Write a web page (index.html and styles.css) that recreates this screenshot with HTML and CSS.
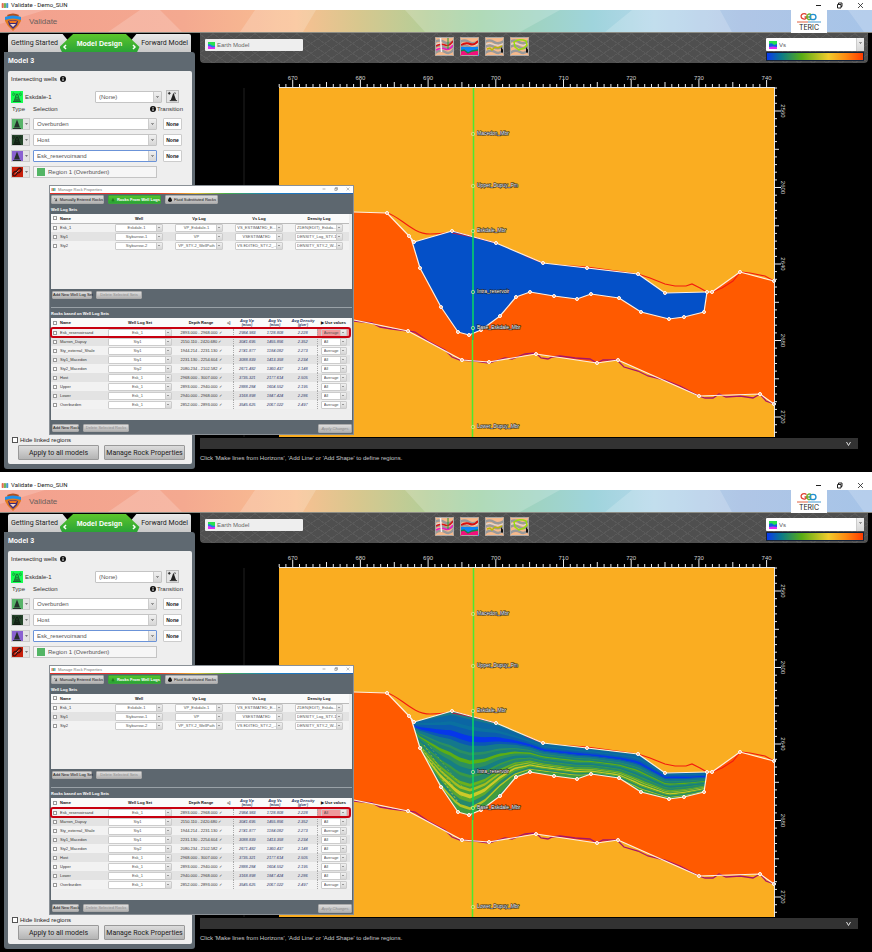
FILE: index.html
```html
<!DOCTYPE html>
<html lang="en">
<head>
<meta charset="utf-8">
<title>Validate - Demo_SUN</title>
<link rel="stylesheet" href="styles.css">
</head>
<body>
<main id="app" class="stack"></main>
<script src="app.js"></script>
</body>
</html>
```

FILE: styles.css
```css
* { box-sizing: border-box; }
body { margin: 0; background: #fff; font-family: "Liberation Sans", Arial, sans-serif; font-size: 6px; color: #333; }
button, select, input { font: inherit; color: inherit; margin: 0; padding: 0; }
svg { display: block; }
.stack { display: flex; flex-direction: column; gap: 8px; }

.win { position: relative; background: #000; }
.titlebar { display: flex; align-items: center; height: 10px; padding: 0 8px 0 1px; gap: 2px; background: #fff; color: #222; font-size: 6px; line-height: 10px; }
.titlebar .name { flex: 1; font-family: Roboto, sans-serif; }
.caption { display: flex; gap: 14px; }
.caption button { border: 0; background: none; width: 7px; height: 7px; }

.banner { position: relative; display: flex; align-items: center; height: 23px; border-bottom: 1px solid #8c8c84;
  background: linear-gradient(90deg, #f3a08e 0%, #f4a990 21%, #f9c092 34%, #d8c78e 41%, #b4ce98 49%, #9fd2a8 55%, #9fd4dc 68%, #b5d7ea 75%, #b0c6e6 85%, #a6c4e8 100%); }
.banner .facets { position: absolute; inset: 0; width: 100%; height: 100%; }
.banner .shield { position: relative; margin-left: 4px; }
.banner h1 { position: relative; flex: 1; margin: 0 0 0 7px; font-size: 8px; font-weight: 400; color: #6a5f5c; }
.banner .logo { position: relative; margin-right: 45px; background: #fff; }

.body { display: flex; align-items: stretch; }
.side { flex: 0 0 191px; margin: 1px 5px 3px 4px; display: flex; flex-direction: column; }
.tabs { display: flex; height: 18px; padding: 0 4px; }
.tabs button { border: 0; background: linear-gradient(#e9e9e9, #c9c9c9); height: 18px; font-size: 7px; white-space: nowrap; font-family: Roboto, sans-serif; color: #222; }
.tabs .first { flex: 1; text-align: left; padding-left: 3px; border-radius: 2px 0 0 0; clip-path: polygon(0 0, 86% 0, 100% 60%, 100% 100%, 0 100%); }
.tabs .last { flex: 1; text-align: right; padding-right: 3px; border-radius: 0 2px 0 0; clip-path: polygon(14% 0, 100% 0, 100% 100%, 0 100%, 0 60%); }
.tabs .on { flex: 0 0 80px; margin: 0 -12px; position: relative; z-index: 1; display: flex; justify-content: space-between; align-items: center; padding: 0 3px; font: bold 7px "Liberation Sans", sans-serif; color: #fff; background: linear-gradient(#5cc62c, #2aa336); clip-path: polygon(17% 0, 83% 0, 100% 72%, 97% 100%, 3% 100%, 0 72%); }
.tabs .on svg { margin-top: 8px; }

.panel { flex: 1; display: flex; flex-direction: column; background: #5f6971; padding: 0 3px 5px 4px; border-radius: 0 3px 3px 3px; }
.panel h2 { margin: 0; height: 19px; line-height: 18px; font-size: 7px; color: #fff; }
.card { flex: 1; display: flex; flex-direction: column; background: #eee; border-radius: 2px; padding: 2px 3px 4px; }
.line { display: flex; align-items: center; }
.heading { height: 12px; margin-bottom: 5px; gap: 3px; color: #222; }
.well { height: 13px; }
.well .wname { flex: 1; padding-left: 2px; }
.well .sel { width: 67px; height: 12px; }
.well .tower { width: 13px; height: 13px; margin: 0 10px 0 4px; border: 1px solid #bbb; background: #e6e6e6; }
.cols { height: 11px; margin-bottom: 4px; }
.cols .c1 { width: 22px; padding-left: 1px; }
.cols .c2 { flex: 1; }
.cols .c3 { display: flex; gap: 1px; align-items: center; margin-right: 6px; }
.rock { height: 12px; margin-bottom: 4px; }
.type { display: flex; width: 19px; height: 12px; border: 0; background: #e4e4e4; align-items: center; outline: 1px solid #ccc; outline-offset: -1px; }
.type .arr { width: 7px; }
.sel { appearance: none; display: block; border: 1px solid #c4c4c4; border-radius: 1px; color: #555; padding: 0 8px 0 3px;
  background: linear-gradient(#888, #888) right 3px top 5px / 1px 1px no-repeat, linear-gradient(#999, #999) right 2px top 4px / 3px 1px no-repeat, linear-gradient(#ccc, #ccc) right 7px top / 1px 100% no-repeat, linear-gradient(#f0f0f0, #d6d6d6) right / 7px 100% no-repeat, #fff; }
.rock .sel, .rock .region { width: 124px; height: 12px; margin-left: 3px; }
.rock .active { border-color: #6b93d8; }
.rock .none { width: 19px; height: 12px; margin-left: 6px; border: 1px solid #ccc; border-radius: 1px; background: #fff; font: bold 5px "Liberation Sans", sans-serif; color: #111; }
.region { display: flex; align-items: center; gap: 3px; padding-left: 3px; border: 1px solid #c4c4c4; background: #f6f6f6; color: #555; text-align: left; }
.swatch { width: 8px; height: 8px; background: #53b565; }
.fill { flex: 1; }
.hide { display: flex; align-items: center; gap: 2px; height: 8px; margin-bottom: 1px; color: #222; }
input[type=checkbox] { appearance: none; flex: none; width: 6px; height: 6px; border: 1px solid #555; background: #fff; }
.hide input { margin-left: 1px; }
.actions { display: flex; gap: 5px; padding: 0 4px 0 7px; }
.actions button { flex: 1; height: 15px; border: 1px solid #999; border-radius: 1px; background: linear-gradient(#dcdcdc, #b4b4b4); font: 7px Roboto, sans-serif; color: #222; white-space: nowrap; }

.view { flex: 1; min-width: 0; margin-right: 4px; display: flex; flex-direction: column; }
.toolbar { display: flex; align-items: flex-start; height: 30px; padding: 4px 4px 0 5px; border-radius: 0 0 4px 4px;
  background: repeating-linear-gradient(35deg, transparent 0 7px, #595959 7px 8px), repeating-linear-gradient(-35deg, transparent 0 7px, #595959 7px 8px), #4f4f4f; }
.earth { display: flex; align-items: center; width: 98px; height: 12px; margin-top: 2px; background: #eee; border-radius: 1px; }
.earth svg, .prop svg { flex: none; margin: 0 2px 0 3px; }
.earth input { width: 80px; border: 0; background: none; color: #666; }
.tools { flex: 1; display: flex; gap: 6px; padding-left: 20%; }
.tools button { width: 19px; height: 19px; padding: 0; border: 0; background: none; }
.scale { width: 98px; margin-top: 1px; }
.prop { display: flex; align-items: center; height: 13px; background: #fff; border-radius: 1px; }
.prop .sel { flex: 1; height: 13px; border: 0; padding-left: 0; }
.ramp { height: 9px; margin-top: 1px; border: 1px solid #15233a; background: linear-gradient(90deg, #0838f0, #0a7a8a 15%, #58ac14 36%, #f2cc2c 64%, #ff8a10 82%, #ff3c00); }
.chart { width: 100%; height: auto; }
.chart text { font-family: "Liberation Sans", sans-serif; font-size: 6px; fill: #d0d0d0; }
.chart .lbl { font-size: 5px; fill: #fff; stroke: #222; stroke-width: 1px; paint-order: stroke; }
.drawer { display: flex; justify-content: flex-end; align-items: center; height: 11px; margin: 1px 10px 0 0; border: 0; background: #323232; padding-right: 7px; }
.status { margin: 0; height: 23px; line-height: 19px; color: #c8c8c8; }

.dialog { position: absolute; left: 49px; top: 185px; width: 305px; background: #5d676f; font-size: 4px; line-height: 5px; padding-bottom: 2px; outline: 1px solid #8a9096; outline-offset: -1px; }
.dtitle { display: flex; align-items: center; gap: 2px; height: 8px; padding: 0 4px 0 2px; background: #fff; color: #777; }
.dtitle .name { flex: 1; }
.dtitle .caption { gap: 8px; }
.dtitle .caption button { width: 4px; height: 4px; }
.rainbow { height: 1px; background: linear-gradient(90deg, #e3322c, #e3322c 35%, #e6b52c 48%, #4aae4a 58%, #1a7fc4 72%, #2464b4); }
.dcontent { padding: 1px 2px 0; }
.dtabs { display: flex; gap: 4px; }
.dtabs button, .dbtn { height: 9px; border: 1px solid #aaa; border-radius: 1px; background: linear-gradient(#ddd, #b2b2b2); color: #111; white-space: nowrap; line-height: 6px; }
.dtabs button { display: flex; align-items: center; gap: 2px; width: 53px; padding-left: 2px; }
.dtabs .on { background: linear-gradient(#52c22e, #28a436); border-color: #3ba33b; color: #fff; font-weight: bold; }
.dialog h3 { margin: 0; height: 10px; line-height: 12px; font-size: 4px; color: #fff; }
.grid { background: #eee; width: 100%; }
.sets { min-height: 75px; padding-right: 3px; }
.rocks { min-height: 102px; padding-right: 2px; }
table { width: 100%; border-collapse: collapse; table-layout: fixed; }
th, td { padding: 0; height: 9px; text-align: center; white-space: nowrap; color: #333; }
th { color: #111; background: #fafafa; border-bottom: 1px solid #bbb; }
.rocks th { height: 10px; }
tr > :first-child { text-align: left; }
tbody tr:nth-child(even) td { background: #e3e3e3; }
tbody tr:nth-child(odd) td { background: #f2f2f2; }
.nm { display: flex; align-items: center; gap: 3px; padding-left: 2px; }
.nm input { width: 4px; height: 4px; border-color: #999; }
.grid .sel { width: 48px; height: 8px; margin: 0 auto; padding: 0 6px 0 1px; text-align: center; text-align-last: center; border-color: #ccc; background-size: 0 0, 2px 1px, 1px 100%, 6px 100%, auto; background-position: 0 0, right 2px center, right 5px top, right, 0 0; line-height: 6px; }
.rocks .sel { width: 64px; }
.rocks .use { width: 26px; text-align-last: left; padding-left: 2px; }
.num { font-style: italic; color: #33406e; }
th.num { color: #223060; line-height: 5px; }
.num small { display: block; font-size: 3px; line-height: 4px; }
.edge { border-left: 1px dotted #aaa; }
.marked { outline: 2px solid #c8000f; outline-offset: -1px; border-radius: 2px; }
.marked td:last-child, .marked .use { background-color: #ef9a9c !important; }
.dfoot { display: flex; gap: 4px; padding-left: 1px; }
.dfoot .dbtn { height: 8px; }
.dfoot .add { width: 40px; }
.dfoot .addrock { width: 27px; }
.dfoot .del { width: 46px; color: #8c8c8c; }
.dfoot .apply { width: 34px; height: 9px; margin: 0 0 0 auto; font-style: italic; color: #8c8c8c; }
.f1 { margin-top: 2px; }
.f2 { margin-top: 4px; }
.rule { border: 0; height: 1px; background: #99a1a7; margin: 8px 0 0; }
```

FILE: app.js
```js
const pts = s => s.trim().split(/\s+/).map(p => p.split(',').map(Number));

const upper = '279,210 354,212 387,213 409,236 414,242 452,231 496,243 543,263 587,268 638,274 665,293 707,292 712,292 740,272 774,281';
const lower = '774,404 760,394 699,396 618,360 597,363 536,354 489,362 462,360 408,331 354,320 279,306';
const bodyTop = '414,242 452,231 496,243 543,263 587,268 638,274 665,293 707,292';
const bodyBottom = '704,312 684,317 669,319 641,312 619,298 591,294 577,299 554,296 530,292 516,297 500,316 481,330 469,335 458,332 441,307 420,268 411,238';

const marks = [
  [134, 'Macedon_Mbr'], [186, 'Upper_Dupuy_Fm'], [231, 'Eskdale_Mbr'],
  [292, 'Intra_reservoir'], [328, 'Base_Eskdale_Mbr'], [427, 'Lower_Dupuy_Mbr']
];

const at = (line, x) => {
  for (let i = 1; i < line.length; i++) {
    if (x <= line[i][0]) {
      const [a, b] = [line[i - 1], line[i]];
      return a[1] + (b[1] - a[1]) * (x - a[0]) / (b[0] - a[0]);
    }
  }
  return line[line.length - 1][1];
};

/* Seismic layers between the reservoir's top and base: [from, to, colour] as depth fractions. */
const layers = [
  [0, 0.03, '#1a7a86'], [0.03, 0.1, '#0b66a4'], [0.1, 0.14, '#0a70a0'], [0.14, 0.2, '#0a5cb0'], [0.2, 0.26, '#0636ea'],
  [0.26, 0.3, '#0a58b4'], [0.3, 0.37, '#14788c'], [0.37, 0.4, '#2a8f62'], [0.4, 0.45, '#1c8078'], [0.45, 0.49, '#5cae14'],
  [0.49, 0.54, '#2c9060'], [0.54, 0.6, '#167e84'], [0.6, 0.63, '#3a9a44'], [0.63, 0.69, '#25896c'], [0.69, 0.72, '#6cb01c'],
  [0.72, 0.74, '#3f9c48'], [0.74, 0.77, '#a4bc20'], [0.77, 0.8, '#44a03c'], [0.8, 0.84, '#ccca28'], [0.84, 0.88, '#5aa830'],
  [0.88, 0.93, '#25896c'], [0.93, 0.96, '#b4c424'], [0.96, 1.05, '#3f9c40']
];
const stackTop = pts('405,240 414,241 452,232 496,243 543,263 587,268 638,274 665,291 710,292');
const stackBase = pts('405,244 420,277 441,310 458,330 470,334 484,326 500,309 514,297 530,291 554,294 577,297 591,296 619,300 641,311 669,319 684,317 710,311');

const edgeAt = f => {
  const p = [];
  for (let x = 405; x <= 710; x += 5) {
    const t = at(stackTop, x), b = at(stackBase, x);
    p.push(x + ',' + Math.round((t + (b - t) * f) * 10) / 10);
  }
  return p;
};
const seismic = () => layers.map(([a, b, color]) =>
  `<polygon points="${edgeAt(a).join(' ')} ${edgeAt(b + 0.01).reverse().join(' ')}" fill="${color}"/>`).join('') +
  '<g fill="none" stroke="#c3c62c" stroke-width="1" stroke-dasharray="2 2"><path d="M421 266 444 302 460 325"/><path d="M424 265 446 297 462 317" opacity=".7"/><path d="M428 264 448 290 462 306" opacity=".4"/></g>';

const knots = s => pts(s).map(([x, y]) => `<circle cx="${x}" cy="${y}" r="1.5"/>`).join('');

const chart = (layered, id) => {
  let axis = '';
  for (let i = -2; i <= 71; i++) {
    const x = 292.7 + i * 6.77;
    if (x > 773) break;
    const len = i % 10 === 0 ? 7 : i % 5 === 0 ? 5 : 3;
    axis += `<path d="M${x.toFixed(1)} 87V${87 - len}"/>`;
  }
  for (let i = -3; i <= 42; i++) {
    const y = 111 + i * 7.65;
    const len = i % 10 === 0 ? 7 : i % 5 === 0 ? 5 : 3;
    axis += `<path d="M774 ${y.toFixed(1)}h${len}"/>`;
  }
  const tops = [670, 680, 690, 700, 710, 720, 730, 740].map((v, i) =>
    `<text x="${(292.7 + i * 67.7).toFixed(1)}" y="80" text-anchor="middle">${v}</text>`).join('');
  const sides = [2560, 2600, 2640, 2680, 2720].map((v, i) =>
    `<text transform="translate(781 ${(111 + i * 76.5).toFixed(1)}) rotate(90)" text-anchor="middle">${v}</text>`).join('');
  return `<svg class="chart" viewBox="200 63 668 374" role="img" aria-label="Cross section">
    <path d="M244 88V437" stroke="#202020"/>
    <rect x="279" y="87" width="495" height="350" fill="#faad21"/>
    <polygon points="${upper} ${lower}" fill="#ff5a00"/>
    <g fill="none" stroke="#f21d10" stroke-width="1.2">
      <path d="M387 213C400 216 412 234 430 234S448 232 456 232L496 244 543 264 587 267 638 274 650 278 665 284 675 286 686 286 692 284 700 288 707 292M712 292 722 288 733 281 740 272 750 273 765 276 774 281"/>
    </g>
    <clipPath id="${id}"><polygon points="${bodyTop} ${bodyBottom}"/></clipPath>
    <g clip-path="url(#${id})"><rect x="405" y="225" width="310" height="115" fill="${layered ? '#23886c' : '#0450c8'}"/>${layered ? seismic() : ''}</g>
    <path d="M452 233 473 237 496 243M543 263 525 256" fill="none" stroke="#c01840"/>
    <polyline points="279,307 354,321 372,323 380,327 392,329 408,331 415,332 428,341 445,350 452,357 460,360 475,361 489,363 505,358 512,359 525,354 536,353 541,358 548,359 552,357 560,356 575,358 590,359 597,363 603,360 617,360 624,367 638,371 648,376 665,380 680,386 699,396 705,398 713,398 719,394 726,397 740,396 753,398 760,394 766,401 774,404" fill="none" stroke="#a81468" stroke-width="1.3"/>
    <g fill="none" stroke="#fff0e0" stroke-width="1.2" stroke-linejoin="round">
      <polyline points="${upper}"/><polyline points="${lower}"/><polyline points="707,292 ${bodyBottom}"/>
    </g>
    <path d="M473.5 88V230M472.500 340V437" stroke="#4ae832" stroke-width="1.500"/><path d="M473 230V340" stroke="#08d860" stroke-width="1.500"/>
    <g fill="#ffb080" stroke="#fff" stroke-width="1">${knots('387,213 409,236 ' + bodyTop + ' 712,292 740,272 774,281')}${knots(bodyBottom.replace(' 411,238', ''))}${knots(lower.replace(' 354,320 279,306', ''))}</g>
    <g fill="none" stroke="#d8e8a0" stroke-width=".7">${marks.map(m => `<circle cx="473" cy="${m[0]}" r="1.7"/>`).join('')}</g>
    ${marks.map(m => `<text class="lbl" x="477" y="${m[0] + 1}">${m[1]}</text>`).join('')}
    <g stroke="#e8e8e8" stroke-width="1"><path d="M279 87.5H774M774.5 87V437"/>${axis}</g>
    ${tops}${sides}
  </svg>`;
};

const tower = (bg, fg, w = 12, waves = true) => `<svg width="${w}" height="${w}" viewBox="0 0 12 12"><rect width="12" height="12" fill="${bg}"/><g fill="none" stroke="${fg}" stroke-width="1"><path d="M3 10.5 5.5 3h1L9 10.5M4 8 8 10M8 8 4 10M5 5.5 7.5 8M7 5.5 4.5 8"/><path d="M2 10.5h8"/>${waves ? '<path d="M4 2Q3 3.200 4 4.500M8 2q1 1.200 0 2.500M2.500 1.500q-1.500 1.800 0 3.500M9.500 1.500q1.500 1.800 0 3.500" stroke-width=".7"/>' : ''}</g></svg>`;
const solidTower = bg => `<svg width="12" height="12" viewBox="0 0 12 12"><rect width="12" height="12" fill="${bg}"/><path d="M6 1.500 9 9.500H3z" fill="#26302c"/><path d="M2 10.500h8M5 6h2M4.500 8h3" stroke="#26302c" fill="none"/></svg>`;
const addTower = '<svg width="11" height="11" viewBox="0 0 12 12"><path d="M7 2 10 10H4z" fill="#222"/><path d="M3 10.500h8M1 2.500h3M2.500 1v3M8.500 1.500q1 1 0 2" stroke="#222" fill="none"/></svg>';
const link = '<svg width="12" height="12" viewBox="0 0 12 12"><rect width="12" height="12" fill="#c81e0a"/><g fill="none" stroke="#3a1010" stroke-width="1.300"><rect x="5.500" y="3" width="5" height="3.200" rx="1.600" transform="rotate(-45 8 4.600)"/><rect x="1.500" y="6" width="5" height="3.200" rx="1.600" transform="rotate(-45 4 7.600)"/></g><path d="M4.500 7.500 7.500 4.500" stroke="#e8b0a0" stroke-width=".7"/></svg>';
const info = '<svg width="6" height="6" viewBox="0 0 6 6"><circle cx="3" cy="3" r="3" fill="#111"/><path d="M3 2.500V5M3 1v.900" stroke="#fff"/></svg>';
const arr = '<svg class="arr" width="7" height="4" viewBox="0 0 7 4"><path d="M2 1h3L3.500 3z" fill="#777"/></svg>';
const brand = (w, h) => `<svg width="${w}" height="${h}" viewBox="0 0 8 6"><rect width="2.500" height="6" rx="1" fill="#e46a50"/><rect x="2.700" width="2.500" height="6" rx="1" fill="#74b458"/><rect x="5.400" width="2.500" height="6" rx="1" fill="#4a98cc"/></svg>`;
const caption = `<span class="caption">
  <button aria-label="Minimise"><svg viewBox="0 0 7 7"><path d="M1 3.500h5" stroke="currentColor"/></svg></button>
  <button aria-label="Restore"><svg viewBox="0 0 7 7"><path d="M1.500 2.500h3.500V6H1.500zM2.500 2.500V1H6v3.500H5" fill="none" stroke="currentColor"/></svg></button>
  <button aria-label="Close"><svg viewBox="0 0 7 7"><path d="M1 1 6 6M6 1 1 6" stroke="currentColor" stroke-width=".8"/></svg></button></span>`;
const cube = '<svg width="7" height="7" viewBox="0 0 7 7"><rect width="7" height="7" fill="#28e050"/><path d="M0 2Q3 2 4 3.500L7 4V7H0z" fill="#2078f0"/><path d="M0 4Q3 4 4 5.500L7 5V7H0z" fill="#e030f0"/></svg>';
const vsIcon = '<svg width="8" height="8" viewBox="0 0 8 8"><rect width="8" height="8" fill="#28e050"/><path d="M0 3Q3 1 5 4L8 3V8H0z" fill="#1060e0"/><path d="M0 6Q4 5 8 6V8H0z" fill="#e030f0"/></svg>';

const strata = extra => `<svg width="19" height="19" viewBox="0 0 19 19"><rect width="19" height="19" rx="1" fill="#f6b98c"/><g fill="none" stroke="#9a9a9a" stroke-width="2.500"><path d="M0 5Q5 2 9 5T19 4M0 10Q5 7 9 10T19 9M0 16Q5 12 10 15T19 12"/></g><path d="M0 7.500Q5 5 9 7.500T19 6.500" fill="none" stroke="#dcdcdc"/>${extra}<rect x=".5" y=".5" width="18" height="18" rx="1" fill="none" stroke="#a8a8a8"/></svg>`;
const cursor = '<path d="M16 10v6l1-1 1 1.500 1-1-1-1.500h1z" fill="#111"/>';
const tools = [
  ['Make lines from horizons', strata('<path d="M1 9Q6 6 10 8T18 4" fill="none" stroke="#d81818" stroke-width="1.500"/><path d="M1 13Q6 10 10 12T18 8" fill="none" stroke="#e81cc0" stroke-width="1.500"/><path d="M5.500 1 6.500 15" stroke="#f4f4f4" stroke-width="1.500"/><path d="M13 1V12" stroke="#2c9c2c"/>')],
  ['Fill regions', strata('<path d="M0 10h19v9H0z" fill="#0a84f8"/><path d="M1 8Q6 5 10 7T18 4" fill="none" stroke="#d81010" stroke-width="2"/><path d="M0 14 4 13 8 16 12 14 18 13V19H0z" fill="#f0107c"/><path d="M0 14 4 13 8 16 12 14 18 13" fill="none" stroke="#108848" stroke-width="1.300"/>')],
  ['Add line', strata('<path d="M2 12 5 11 7 13 10 10 13 11 17 9" fill="none" stroke="#b8b80c" stroke-width="1.500"/>' + cursor)],
  ['Add shape', strata('<path d="M4 5Q9 1 16 4L17 8 14 11 9 13 5 10Z" fill="none" stroke="#98dc10" stroke-width="1.500"/>' + cursor)]
];

const select = (value, cls = '', label = value) => `<select class="sel ${cls}" aria-label="${label}"><option>${value}</option></select>`;
const box = name => `<label class="nm"><input type="checkbox">${name}</label>`;

const setRows = [
  ['Esk_1', 'Eskdale-1', 'VP_Eskdale-1', 'VS_ESTIMATED_E...', 'ZDEN(EDIT)_Eskda...'],
  ['Sty1', 'Stybarrow-1', 'VP', 'VSESTIMATED', 'DENSITY_Log_STY-1'],
  ['Sty2', 'Stybarrow-2', 'VP_STY-2_WellPath', 'VS EDITED_STY-2_...', 'DENSITY_STY-2_W...']
];
const rockRows = [
  ['Esk_reservoirsand', 'Esk_1', '2893.000 - 2968.000', '2984.983', '1728.808', '2.228', 'Average'],
  ['Marron_Dupuy', 'Sty1', '2150.110 - 2420.680', '3041.695', '1455.856', '2.352', 'All'],
  ['Sty_external_Shale', 'Sty1', '1944.214 - 2231.130', '2741.877', '1184.082', '2.273', 'Average'],
  ['Sty1_Macedon', 'Sty1', '2231.130 - 2254.604', '3088.839', '1413.358', '2.234', 'All'],
  ['Sty2_Macedon', 'Sty2', '2080.234 - 2102.582', '2671.482', '1360.437', '2.148', 'All'],
  ['Host', 'Esk_1', '2968.000 - 3007.000', '3735.321', '2177.614', '2.505', 'Average'],
  ['Upper', 'Esk_1', '2893.000 - 2940.000', '2888.284', '1604.552', '2.195', 'All'],
  ['Lower', 'Esk_1', '2940.000 - 2968.000', '3168.898', '1847.424', '2.286', 'All'],
  ['Overburden', 'Esk_1', '2852.000 - 2893.000', '3545.625', '2067.022', '2.497', 'Average']
];

const dialog = use => `<section class="dialog" aria-label="Manage Rock Properties">
  <div class="dtitle">${brand(5, 3)}<span class="name">Manage Rock Properties</span>${caption}</div>
  <div class="rainbow"></div>
  <div class="dcontent">
    <div class="dtabs"><button>${addTower.replace('width="11" height="11"', 'width="5" height="5"')}Manually Entered Rocks</button><button class="on">${tower('none', '#175a20', 5, false)}Rocks From Well Logs</button><button><svg width="4" height="5" viewBox="0 0 4 5"><path d="M2 0Q4 2 4 3.200A2 1.800 0 0 1 0 3.200Q0 2 2 0" fill="#111"/></svg>Fluid Substituted Rocks</button></div>
    <h3>Well Log Sets</h3>
    <div class="grid sets"><table>
      <colgroup><col style="width:58px"><col><col><col><col></colgroup>
      <thead><tr><th>${box('Name')}</th><th>Well</th><th>Vp Log</th><th>Vs Log</th><th>Density Log</th></tr></thead>
      <tbody>${setRows.map(r => `<tr><td>${box(r[0])}</td>${r.slice(1).map(v => `<td>${select(v)}</td>`).join('')}</tr>`).join('')}</tbody>
    </table></div>
    <div class="dfoot f1"><button class="dbtn add">Add New Well Log Set</button><button class="dbtn del" disabled>Delete Selected Sets</button></div>
    <hr class="rule">
    <h3>Rocks based on Well Log Sets</h3>
    <div class="grid rocks"><table>
      <colgroup><col style="width:51px"><col style="width:76px"><col style="width:46px"><col style="width:9px"><col style="width:28px"><col style="width:28px"><col style="width:28px"><col></colgroup>
      <thead><tr><th>${box('Name')}</th><th>Well Log Set</th><th>Depth Range</th><th>◁</th><th class="num">Avg Vp<small>(m/sec)</small></th><th class="num">Avg Vs<small>(m/sec)</small></th><th class="num">Avg Density<small>(g/cm³)</small></th><th>▶ Use values</th></tr></thead>
      <tbody>${rockRows.map((r, i) => `<tr${i ? '' : ' class="marked"'}><td>${box(r[0])}</td><td>${select(r[1])}</td><td>${r[2]} ✓</td><td></td><td class="num edge">${r[3]}</td><td class="num">${r[4]}</td><td class="num">${r[5]}</td><td class="edge">${select(i ? r[6] : use, 'use')}</td></tr>`).join('')}</tbody>
    </table></div>
    <div class="dfoot f2"><button class="dbtn addrock">Add New Rock</button><button class="dbtn del" disabled>Delete Selected Rocks</button><button class="dbtn apply" disabled>Apply Changes</button></div>
  </div>
</section>`;

const rock = (icon, name, cls = '') => `<div class="line rock"><button class="type" aria-label="Type">${icon}${arr}</button>${select(name, cls)}<button class="none">None</button></div>`;

const win = (layered, i) => `<section class="win">
  <div class="titlebar">${brand(8, 5)}<span class="name">Validate - Demo_SUN</span>${caption}</div>
  <header class="banner">
    <svg class="facets" viewBox="0 0 872 22" preserveAspectRatio="none"><g fill="#fff" opacity=".18"><path d="M0 0H45L0 14zM108 22 140 0H160L182 22zM255 0H316L303 22H240zM405 0H560L520 22H425zM632 0H720L732 22H605zM848 0H872V22H864z"/></g></svg>
    <svg class="shield" width="18" height="19" viewBox="0 0 18 19"><path d="M1 5Q9 2 17 5V9L14 14 9 19 4 14 1 9z" fill="#e07a20"/><path d="M3 3Q9 0 15 3L14 5Q9 3 4 5z" fill="#b4501c"/><path d="M1 5Q9 2 17 5V8Q9 5 1 8z" fill="#2090e8"/><path d="M4 9Q9 7 14 9L13 13 9 17 5 13z" fill="#3c2c78"/><path d="M5 9Q9 8 13 9L12 11H6z" fill="#f07820"/><path d="M6 12h6L9 15z" fill="#f8d8c0"/></svg>
    <h1>Validate</h1>
    <svg class="logo" width="36" height="23" viewBox="0 0 36 23" role="img" aria-label="GeoTeric"><g fill="none" stroke-width="1.300"><path d="M15.500 4.700A3 2.700 0 1 0 16 7H13.500" stroke="#e04030"/><path d="M16 7H20.500M20.500 4.700A3 2.700 0 1 0 20.500 9" stroke="#70b030"/><ellipse cx="22" cy="7" rx="3" ry="2.700" stroke="#2090d0"/></g><path d="M6 12H17" stroke="#e06040"/><path d="M17 12H30" stroke="#4098d0"/><text x="18" y="20" text-anchor="middle" font-family="Inter" font-size="7" fill="#222">TERIC</text></svg>
  </header>
  <div class="body">
    <aside class="side">
      <nav class="tabs"><button class="first">Getting Started</button><button class="on"><svg width="4" height="6" viewBox="0 0 4 6"><path d="M3 1 1 3 3 5" fill="none" stroke="#fff" stroke-width="1.500"/></svg>Model Design<svg width="4" height="6" viewBox="0 0 4 6"><path d="M1 1 3 3 1 5" fill="none" stroke="#fff" stroke-width="1.500"/></svg></button><button class="last">Forward Model</button></nav>
      <div class="panel">
        <h2>Model 3</h2>
        <div class="card">
          <div class="line heading">Intersecting wells ${info}</div>
          <div class="line well">${tower('#14ff50', '#1c6c34')}<span class="wname">Eskdale-1</span>${select('(None)')}<button class="tower" aria-label="Add well">${addTower}</button></div>
          <div class="line cols"><span class="c1">Type</span><span class="c2">Selection</span><span class="c3">${info}Transition</span></div>
          ${rock(solidTower('#57b368'), 'Overburden')}
          ${rock(tower('#26472c', '#101c12'), 'Host')}
          ${rock(solidTower('#8a62d2'), 'Esk_reservoirsand', 'active')}
          <div class="line rock"><button class="type" aria-label="Linked type">${link}${arr}</button><button class="region"><span class="swatch"></span>Region 1 (Overburden)</button></div>
          <div class="fill"></div>
          <label class="hide"><input type="checkbox">Hide linked regions</label>
          <div class="actions"><button>Apply to all models</button><button>Manage Rock Properties</button></div>
        </div>
      </div>
    </aside>
    <section class="view">
      <div class="toolbar">
        <div class="earth">${cube}<input type="text" value="Earth Model" aria-label="Model name"></div>
        <div class="tools">${tools.map(t => `<button aria-label="${t[0]}">${t[1]}</button>`).join('')}</div>
        <div class="scale"><div class="prop">${vsIcon}${select('Vs')}</div><div class="ramp"></div></div>
      </div>
      ${chart(layered, 'reservoir' + i)}
      <button class="drawer" aria-label="Expand"><svg width="5" height="6" viewBox="0 0 5 6"><path d="M.5 1 2.500 4.500 4.500 1" fill="none" stroke="#ddd"/></svg></button>
      <p class="status">Click 'Make lines from Horizons', 'Add Line' or 'Add Shape' to define regions.</p>
    </section>
  </div>
  ${dialog(layered ? 'All' : 'Average')}
</section>`;

document.getElementById('app').innerHTML = win(false, 1) + win(true, 2);
```
